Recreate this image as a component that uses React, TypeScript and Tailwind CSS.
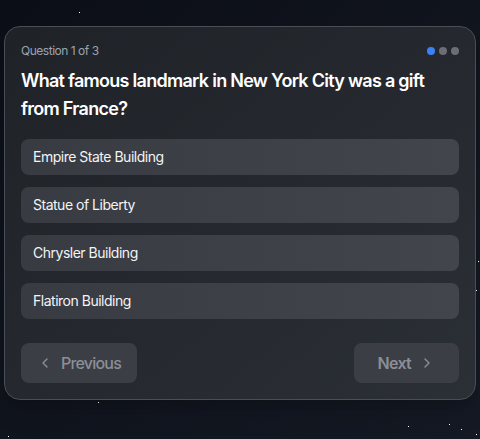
import React from 'react';
import { ChevronLeft, ChevronRight } from 'lucide-react';

const stars = [
  { x: 79, y: 12 },
  { x: 98, y: 402 },
  { x: 8, y: 436 },
  { x: 408, y: 426 },
  { x: 449, y: 424 },
  { x: 461, y: 429 },
  { x: 476, y: 434 },
  { x: 478, y: 261 },
  { x: 476, y: 290 },
];

const options = [
  'Empire State Building',
  'Statue of Liberty',
  'Chrysler Building',
  'Flatiron Building',
];

const App: React.FC = () => {
  return (
    <div
      className="relative min-h-[439px] w-full overflow-hidden bg-gradient-to-br from-[#0b0e16] via-[#10141d] to-[#141923] px-1 pt-[26px] pb-10"
      style={{ fontFamily: 'Inter, "Noto Sans", sans-serif' }}
    >
      {stars.map((s, i) => (
        <div
          key={i}
          className="absolute h-px w-px bg-white"
          style={{ left: s.x, top: s.y }}
        />
      ))}

      <div className="relative rounded-2xl border border-[#4a4e56] bg-gradient-to-br from-[#1f2227] to-[#2b2f36] p-4 shadow-xl">
        <div className="mb-2 flex items-center justify-between">
          <span className="text-xs tracking-[-0.04em] text-[#9ca3af]">Question 1 of 3</span>
          <div className="flex items-center gap-1">
            <span className="h-2 w-2 rounded-full bg-[#3b82f6]" />
            <span className="h-2 w-2 rounded-full bg-[#6b6e74]" />
            <span className="h-2 w-2 rounded-full bg-[#6b6e74]" />
          </div>
        </div>

        <h2 className="mb-4 pr-8 text-lg font-semibold leading-7 tracking-[-0.04em] text-white">
          What famous landmark in New York City was a gift from France?
        </h2>

        <div className="flex flex-col gap-3">
          {options.map((opt) => (
            <button
              key={opt}
              className="w-full rounded-lg bg-gradient-to-r from-[#383b42] to-[#42454c] px-3 py-2 text-left text-sm tracking-[-0.035em] text-[#f3f4f6]"
            >
              {opt}
            </button>
          ))}
        </div>

        <div className="mt-6 flex items-center justify-between">
          <button className="flex h-10 items-center gap-2 rounded-lg bg-[#3b3e45] px-4 text-base font-medium tracking-[-0.05em] text-[#8b8f96]">
            <ChevronLeft className="h-4 w-4" />
            Previous
          </button>
          <button className="flex h-10 items-center gap-2 rounded-lg bg-[#3b3e45] px-6 text-base font-semibold tracking-[-0.045em] text-[#8b8f96]">
            Next
            <ChevronRight className="h-4 w-4" />
          </button>
        </div>
      </div>
    </div>
  );
};

export default App;
